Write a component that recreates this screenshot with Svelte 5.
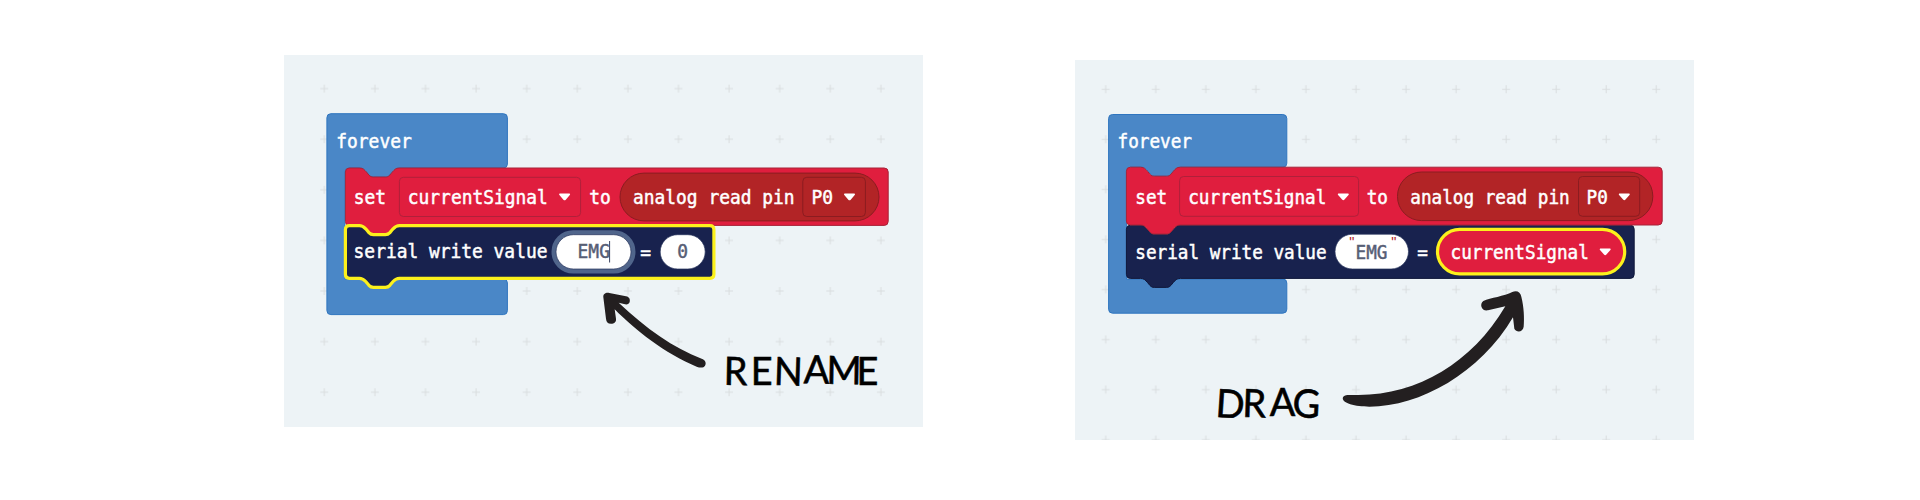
<script>
  const bump = (x) => `H${x + 14} c4 0 5 2 7 4 l2.5 3 c1.5 1.6 2.5 2 4.5 2 h12 c2 0 3 -0.4 4.5 -2 l2.5 -3 c2 -2 3 -4 7 -4`;
  const bumpBack = (x) => `H${x + 54} c-4 0 -5 2 -7 4 l-2.5 3 c-1.5 1.6 -2.5 2 -4.5 2 h-12 c-2 0 -3 -0.4 -4.5 -2 l-2.5 -3 c-2 -2 -3 -4 -7 -4`;
  const statement = (x, y, r, b) =>
    `M${x} ${y + 4} q0 -4 4 -4 ${bump(x)} H${r - 4} q4 0 4 4 V${b - 4} q0 4 -4 4 ${bumpBack(x)} H${x + 4} q-4 0 -4 -4 Z`;
  const loop = (x, y, r, b, top, bottom) =>
    `M${x} ${y + 4} q0 -4 4 -4 H${r - 4} q4 0 4 4 V${top - 4} q0 4 -4 4 ${bumpBack(x + 18.5)} H${x + 22} q-4 0 -4 4 V${bottom} H${r - 4} q4 0 4 4 V${b - 4} q0 4 -4 4 H${x + 4} q-4 0 -4 -4 Z`;

  const panels = [
    {
      id: 'rename', box: [284, 55, 639, 372], pitch: 10.77, grid: [324.3, 88.7, 50.6],
      loop: loop(326.9, 113.7, 507.4, 314.6, 168, 279),
      set: statement(345.4, 168, 888.2, 225.4),
      serial: statement(345.4, 225.6, 713.9, 278.3),
      selected: true,
      fields: [[399.4, 177.3, 181.2, 39.2]],
      reporter: [620, 173.1, 259, 47.8],
      pin: [802.8, 177.3, 62.6, 39.2],
      carets: [[564.6, 193.6], [849.5, 193.6]],
      texts: [['forever', 336.3, 147.6], ['set', 353.8, 203.8], ['currentSignal', 407.8, 203.8], ['to', 589.3, 203.8],
        ['analog read pin', 633, 203.8], ['P0', 811.6, 203.8], ['serial write value', 353.6, 258.4], ['=', 640.2, 258.8]],
      slots: [[556, 234.7, 75, 34.3], [660.2, 234.7, 45, 34.3]],
      values: [['EMG', 577.6, 258.4], ['0', 677.3, 258.4]]
    },
    {
      id: 'drag', box: [1075, 60, 619, 380], pitch: 10.63, grid: [1105.7, 89.3, 50.05],
      loop: loop(1108.6, 114.5, 1286.8, 313.2, 167.2, 279),
      set: statement(1126.4, 167.2, 1662.2, 225),
      serial: statement(1126.4, 225.2, 1634.2, 278.4),
      selected: false,
      fields: [[1179.6, 176.5, 179, 39.8]],
      reporter: [1397.5, 172, 255.3, 48.6],
      pin: [1578.5, 176.5, 61.2, 39.8],
      carets: [[1343.3, 193.4], [1624.3, 193.4]],
      texts: [['forever', 1117.5, 147.6], ['set', 1135.3, 203.6], ['currentSignal', 1188.2, 203.6], ['to', 1366.7, 203.6],
        ['analog read pin', 1410.3, 203.6], ['P0', 1586.6, 203.6], ['serial write value', 1135.3, 258.5], ['=', 1417.3, 259]],
      slots: [[1335, 234.2, 73.5, 34.8]],
      values: [['EMG', 1355.6, 258.5]]
    }
  ];
  const caret = (x, y) => `M${x - 5} ${y} h10 q1 .6 .2 1.5 l-4 4.6 q-1.2 1.3 -2.4 0 l-4 -4.6 q-.8 -.9 .2 -1.5 Z`;
</script>

{#snippet label(text, x, y, pitch, kind)}
  <text class={kind} {x} {y} textLength={text.length * pitch} lengthAdjust="spacingAndGlyphs">{text}</text>
{/snippet}

<main>
  {#each panels as p}
    <section class={p.id}>
      <svg viewBox={p.box.join(' ')} width={p.box[2]} height={p.box[3]}>
        <defs>
          <pattern id={`grid-${p.id}`} x={p.grid[0] - 10} y={p.grid[1] - 10} width={p.grid[2]} height={p.grid[2]} patternUnits="userSpaceOnUse">
            <path d="M6 10h8M10 6v8" stroke="#d9dddf" stroke-width="1" />
          </pattern>
        </defs>
        <rect x={p.box[0]} y={p.box[1]} width={p.box[2]} height={p.box[3]} fill={`url(#grid-${p.id})`} />
        <path class="loop" d={p.loop} />
        {#if p.selected}
          <path class="set" d={p.set} />
          <path class="serial selected" d={p.serial} />
        {:else}
          <path class="serial" d={p.serial} />
          <path class="set" d={p.set} />
        {/if}
        {#each p.fields as [x, y, w, h]}
          <rect class="field" {x} {y} width={w} height={h} rx="4" />
        {/each}
        <rect class="reporter" x={p.reporter[0]} y={p.reporter[1]} width={p.reporter[2]} height={p.reporter[3]} rx="24" />
        <rect class="pin" x={p.pin[0]} y={p.pin[1]} width={p.pin[2]} height={p.pin[3]} rx="4" />
        {#each p.carets as [x, y]}
          <path class="caret" d={caret(x, y)} />
        {/each}
        {#each p.slots as [x, y, w, h], i}
          {#if p.selected && i === 0}
            <rect class="halo" x={x - 2} y={y - 2} width={w + 4} height={h + 4} rx="19.2" />
          {/if}
          <rect class="slot" {x} {y} width={w} height={h} rx="17.4" />
        {/each}
        {#each p.texts as [text, x, y]}
          {@render label(text, x, y, p.pitch, 'code')}
        {/each}
        {#each p.values as [text, x, y]}
          {@render label(text, x, y, p.pitch, 'value')}
        {/each}

        {#if p.selected}
          <path d="M609.6 241v21.5" stroke="#3d4560" stroke-width="1" />
          <path class="arrow" transform="translate(530 200) scale(.33333)"
            d="M220 292C219 282 227 277 238 279L288 289C298 291 301 298 299 306C297 313 290 315 282 312L266 308C350 387 430 443 515 476C526 480 530 489 525 497C521 504 511 504 500 500C405 461 315 390 254 328L258 356C259 366 253 371 243 371C233 371 229 366 228 356Z" />
          <text class="note" transform="translate(0 384.8) scale(.97 1)" x="746 774 797.5 828.3 851.8 883" y="0 .6 0 -1.5 -1 .6" rotate="1 0 2 1 1 0">RENAME</text>
        {:else}
          <text class="quote" x="1349.2" y="247.4">"</text>
          <text class="quote" x="1391.3" y="247.4">"</text>
          <rect class="variable" x="1437.5" y="229.4" width="187.2" height="44.4" rx="22.2" />
          {@render label('currentSignal', 1450.6, 258.5, p.pitch, 'code')}
          <path class="caret" d={caret(1605.2, 248.4)} />
          <path class="arrow" transform="translate(1320 210) scale(.33333)"
            d="M69 562C72 553 84 555 110 555C290 557 455 460 556 289L504 301C485 305 477 282 490 273C512 263 552 259 577 246C590 240 602 246 604 260C612 292 613 324 611 350C609 366 590 369 583 356L579 322C480 490 300 590 148 590C108 590 62 580 69 562Z" />
          <text class="note" transform="translate(0 416.8) scale(.97 1)" x="1252.5 1280.5 1309 1332" y="0 0 -1 0" rotate="4 2 0 3">DRAG</text>
        {/if}
      </svg>
    </section>
  {/each}
</main>

<style>
  :global(body) { background: #fff; overflow: hidden; }
  main { display: flex; align-items: flex-start; gap: 152px; box-sizing: border-box; width: 1920px; height: 500px; padding: 55px 226px 0 284px; background: #fff; }
  section { flex: none; background: #edf3f6; }
  .drag { margin-top: 5px; }
  svg { display: block; }
  .loop { fill: #4a87c7; stroke: #2f75bf; stroke-width: 1; }
  .set { fill: #e01e3e; stroke: #a72338; stroke-width: 1; }
  .serial { fill: #18224e; stroke: #10183b; stroke-width: 1; }
  .serial.selected { stroke: #fcf11c; stroke-width: 3.2; }
  .field { fill: none; stroke: #b0203a; stroke-width: 1; }
  .reporter { fill: #b22426; stroke: #8b1c20; stroke-width: 1; }
  .pin { fill: none; stroke: #8b1c20; stroke-width: 1; }
  .slot { fill: #fff; stroke: #26345c; stroke-width: .7; }
  .halo { fill: none; stroke: #50658b; stroke-width: 5; }
  .variable { fill: #e01e3e; stroke: #fcf11c; stroke-width: 3.2; }
  .caret { fill: #fff; }
  .arrow { fill: #231f20; }
  text { font-family: "DejaVu Sans Mono", monospace; font-size: 19.6px; white-space: pre; }
  .code { fill: #fff; stroke: #fff; stroke-width: .5; }
  .value { fill: #575e75; stroke: #575e75; stroke-width: .5; }
  .quote { font-size: 14.5px; font-family: "Liberation Sans", sans-serif; fill: #b22426; }
  .note { font-family: Lato, sans-serif; font-size: 39px; fill: #000; stroke: #000; stroke-width: .6; }
</style>
